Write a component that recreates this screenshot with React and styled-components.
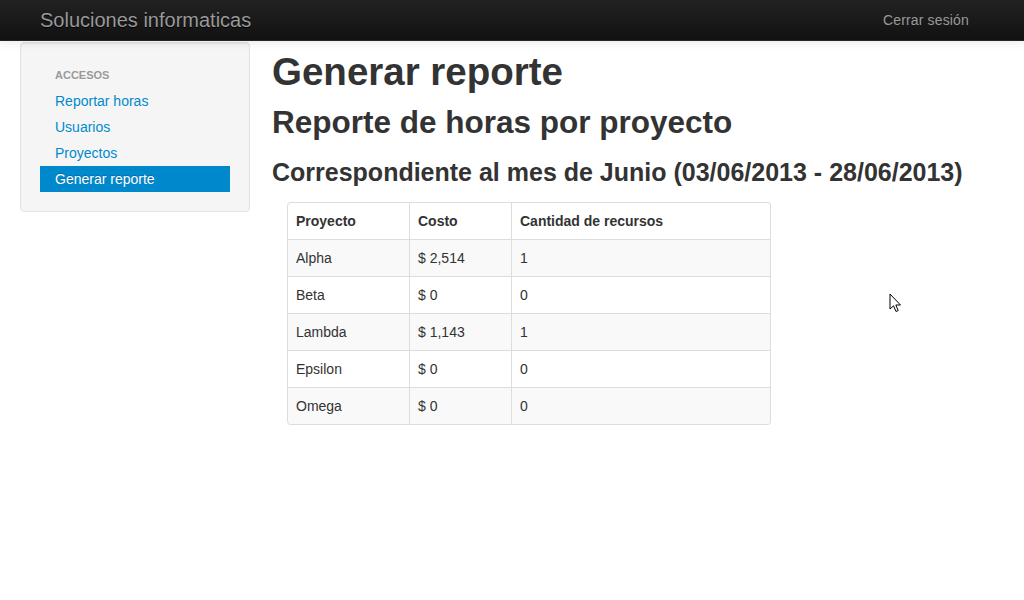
import React from "react";
import styled, { createGlobalStyle } from "styled-components";

const Global = createGlobalStyle`
  html, body { margin: 0; padding: 0; background: #fff; }
  body {
    font-family: "Liberation Sans", Helvetica, Arial, sans-serif;
    font-size: 14px;
    line-height: 20px;
    color: #333;
  }
  * { box-sizing: border-box; }
`;

const Page = styled.div`
  position: relative;
  width: 1024px;
  min-height: 600px;
`;

const Navbar = styled.header`
  height: 41px;
  background-image: linear-gradient(to bottom, #222222, #111111);
  border-bottom: 1px solid #252525;
  box-shadow: 0 1px 10px rgba(0, 0, 0, 0.1);
  display: flex;
  align-items: center;
  justify-content: space-between;
  padding: 0 40px 0 20px;
  position: relative;
  z-index: 2;
`;

const Brand = styled.a`
  font-size: 20px;
  line-height: 20px;
  font-weight: 200;
  color: #999;
  padding: 10px 20px;
  text-decoration: none;
  text-shadow: 0 1px 0 #000;
`;

const NavLink = styled.a`
  font-size: 14px;
  line-height: 20px;
  color: #999;
  padding: 10px 15px;
  text-decoration: none;
  letter-spacing: 0.15px;
`;

const Body = styled.div`
  display: flex;
  align-items: flex-start;
  padding: 1px 20px 0 20px;
  gap: 22px;
`;

const Well = styled.aside`
  width: 230px;
  flex: none;
  background: #f5f5f5;
  border: 1px solid #e3e3e3;
  border-radius: 4px;
  box-shadow: inset 0 1px 1px rgba(0, 0, 0, 0.05);
  padding: 19px 19px 19px 19px;
`;

const NavList = styled.ul`
  list-style: none;
  margin: 0;
  padding: 0;
  display: flex;
  flex-direction: column;
`;

const NavHeader = styled.li`
  font-size: 11px;
  font-weight: bold;
  line-height: 20px;
  color: #999;
  text-transform: uppercase;
  text-shadow: 0 1px 0 rgba(255, 255, 255, 0.5);
  padding: 3px 15px;
`;

const NavItem = styled.li`
  a {
    display: block;
    padding: 3px 15px;
    line-height: 20px;
    text-decoration: none;
    color: ${(p) => (p.$active ? "#fff" : "#0088cc")};
    background: ${(p) => (p.$active ? "#0088cc" : "transparent")};
    text-shadow: ${(p) =>
      p.$active ? "0 -1px 0 rgba(0,0,0,0.2)" : "0 1px 0 rgba(255,255,255,0.5)"};
  }
`;

const Main = styled.main`
  flex: 1;
  display: flex;
  flex-direction: column;
`;

const H1 = styled.h1`
  margin: 10px 0;
  font-size: 38.5px;
  line-height: 40px;
  font-weight: bold;
  color: #333;
`;

const H2 = styled.h2`
  margin: 0 0 10px;
  font-size: 31.5px;
  line-height: 40px;
  font-weight: bold;
`;

const H3 = styled.h3`
  margin: 0 0 10px;
  font-size: 25px;
  line-height: 40px;
  font-weight: bold;
`;

const Table = styled.table`
  margin-left: 15px;
  width: 483px;
  table-layout: fixed;
  border-collapse: separate;
  border-spacing: 0;
  border: 1px solid #ddd;
  border-left: 0;
  border-radius: 4px;

  th,
  td {
    padding: 8px;
    line-height: 20px;
    text-align: left;
    vertical-align: top;
    border-left: 1px solid #ddd;
    border-top: 1px solid #ddd;
  }
  thead tr:first-child th {
    border-top: 0;
  }
  th {
    font-weight: bold;
  }
  tbody tr:nth-child(odd) td {
    background: #f9f9f9;
  }
  thead tr:first-child th:first-child {
    border-top-left-radius: 4px;
  }
  thead tr:first-child th:last-child {
    border-top-right-radius: 4px;
  }
  tbody tr:last-child td:first-child {
    border-bottom-left-radius: 4px;
  }
  tbody tr:last-child td:last-child {
    border-bottom-right-radius: 4px;
  }
`;

const Cursor = styled.svg`
  position: absolute;
  left: 889px;
  top: 293px;
  pointer-events: none;
`;

const rows = [
  ["Alpha", "$ 2,514", "1"],
  ["Beta", "$ 0", "0"],
  ["Lambda", "$ 1,143", "1"],
  ["Epsilon", "$ 0", "0"],
  ["Omega", "$ 0", "0"],
];

export default function App() {
  return (
    <Page>
      <Global />
      <Navbar>
        <Brand href="#">Soluciones informaticas</Brand>
        <NavLink href="#">Cerrar sesión</NavLink>
      </Navbar>
      <Body>
        <Well>
          <NavList>
            <NavHeader>Accesos</NavHeader>
            <NavItem>
              <a href="#">Reportar horas</a>
            </NavItem>
            <NavItem>
              <a href="#">Usuarios</a>
            </NavItem>
            <NavItem>
              <a href="#">Proyectos</a>
            </NavItem>
            <NavItem $active>
              <a href="#">Generar reporte</a>
            </NavItem>
          </NavList>
        </Well>
        <Main>
          <H1>Generar reporte</H1>
          <H2>Reporte de horas por proyecto</H2>
          <H3>Correspondiente al mes de Junio (03/06/2013 - 28/06/2013)</H3>
          <Table>
            <colgroup>
              <col style={{ width: 122 }} />
              <col style={{ width: 102 }} />
              <col style={{ width: 259 }} />
            </colgroup>
            <thead>
              <tr>
                <th>Proyecto</th>
                <th>Costo</th>
                <th>Cantidad de recursos</th>
              </tr>
            </thead>
            <tbody>
              {rows.map((r) => (
                <tr key={r[0]}>
                  <td>{r[0]}</td>
                  <td>{r[1]}</td>
                  <td>{r[2]}</td>
                </tr>
              ))}
            </tbody>
          </Table>
        </Main>
      </Body>
      <Cursor width="14" height="22" viewBox="0 0 14 22">
        <path
          d="M1 1 L1 16 L4.5 12.8 L7 18.5 L9.2 17.5 L6.8 12 L11.5 12 Z"
          fill="#fff"
          stroke="#000"
          strokeWidth="1"
          strokeLinejoin="miter"
        />
      </Cursor>
    </Page>
  );
}
